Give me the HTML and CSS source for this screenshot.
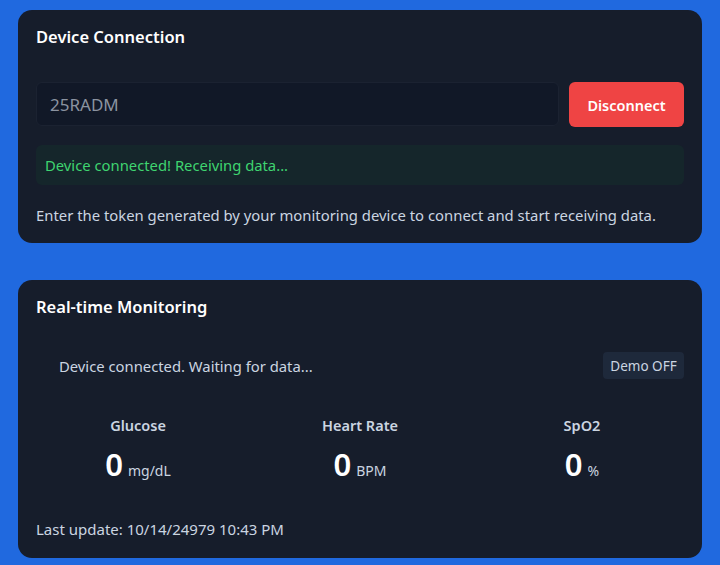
FILE: index.html
```html
<!DOCTYPE html>
<html lang="en">
<head>
<meta charset="utf-8">
<title>Device Monitor</title>
<link rel="stylesheet" href="styles.css">
</head>
<body>
<main class="page">
  <section class="card card-connect">
    <h2 class="card-title">Device Connection</h2>
    <div class="connect-row">
      <input class="token-input" type="text" value="25RADM" readonly>
      <button class="btn-disconnect" type="button">Disconnect</button>
    </div>
    <div class="status-ok">Device connected! Receiving data...</div>
    <p class="hint">Enter the token generated by your monitoring device to connect and start receiving data.</p>
  </section>

  <section class="card card-monitor">
    <h2 class="card-title">Real-time Monitoring</h2>
    <div class="monitor-head">
      <span class="waiting">Device connected. Waiting for data...</span>
      <button class="btn-demo" type="button">Demo OFF</button>
    </div>
    <div class="metrics">
      <div class="metric">
        <div class="metric-label">Glucose</div>
        <div class="metric-value"><span class="num">0</span><span class="unit">mg/dL</span></div>
      </div>
      <div class="metric">
        <div class="metric-label">Heart Rate</div>
        <div class="metric-value"><span class="num">0</span><span class="unit">BPM</span></div>
      </div>
      <div class="metric">
        <div class="metric-label">SpO2</div>
        <div class="metric-value"><span class="num">0</span><span class="unit">%</span></div>
      </div>
    </div>
    <p class="last-update">Last update: 10/14/24979 10:43 PM</p>
  </section>
</main>
</body>
</html>
```

FILE: styles.css
```css
* { box-sizing: border-box; }
html, body { margin: 0; padding: 0; }
body {
  background: #2069df;
  font-family: "Noto Sans", "Open Sans", sans-serif;
  color: #cbd5e1;
  width: 720px;
  height: 565px;
  overflow: hidden;
}
.page {
  padding: 10px 18px 0 18px;
  display: flex;
  flex-direction: column;
  gap: 37px;
}
.card {
  background: #161d2b;
  border-radius: 14px;
  padding: 17px 18px;
}
.card-connect { height: 233px; }
.card-monitor { height: 278px; }
.card-title {
  margin: 0;
  color: #ffffff;
  font-size: 16.5px;
  font-weight: 600;
  line-height: 20px;
}
.connect-row {
  display: flex;
  gap: 10px;
  margin-top: 35px;
}
.token-input {
  flex: 1;
  height: 44px;
  background: #111827;
  border: 1px solid #1b2231;
  border-radius: 6px;
  color: #8b93a0;
  font-family: inherit;
  font-size: 17px;
  padding: 0 13px;
  outline: none;
}
.btn-disconnect {
  width: 115px;
  height: 45px;
  background: #ef4444;
  color: #ffffff;
  border: 0;
  border-radius: 6px;
  font-family: inherit;
  font-size: 14.5px;
  font-weight: 600;
}
.status-ok {
  margin-top: 18px;
  height: 40px;
  background: #15262b;
  border-radius: 6px;
  color: #3fd470;
  font-size: 14.8px;
  display: flex;
  align-items: center;
  padding: 0 9px;
}
.hint {
  margin: 19px 0 0;
  font-size: 14.85px;
  line-height: 22px;
}
.monitor-head {
  display: flex;
  align-items: center;
  justify-content: space-between;
  margin-top: 35px;
  padding-left: 23px;
}
.waiting { font-size: 14.8px; }
.btn-demo {
  height: 27px;
  width: 81px;
  background: #1e293b;
  color: #cbd5e1;
  border: 0;
  border-radius: 4px;
  font-family: inherit;
  font-size: 13.5px;
  padding: 0;
}
.metrics {
  display: grid;
  grid-template-columns: repeat(3, 1fr);
  column-gap: 18px;
  margin-top: 36px;
}
.metric { text-align: center; }
.metric-label {
  font-size: 14.5px;
  font-weight: 600;
  color: #cbd5e1;
  line-height: 20px;
}
.metric-value {
  margin-top: 9px;
  display: flex;
  justify-content: center;
  align-items: baseline;
  gap: 5px;
}
.num {
  font-size: 31px;
  font-weight: 600;
  color: #ffffff;
  line-height: 40px;
}
.unit {
  font-size: 14px;
  color: #cbd5e1;
}
.last-update {
  margin: 34px 0 0;
  font-size: 15px;
  line-height: 22px;
}
```
